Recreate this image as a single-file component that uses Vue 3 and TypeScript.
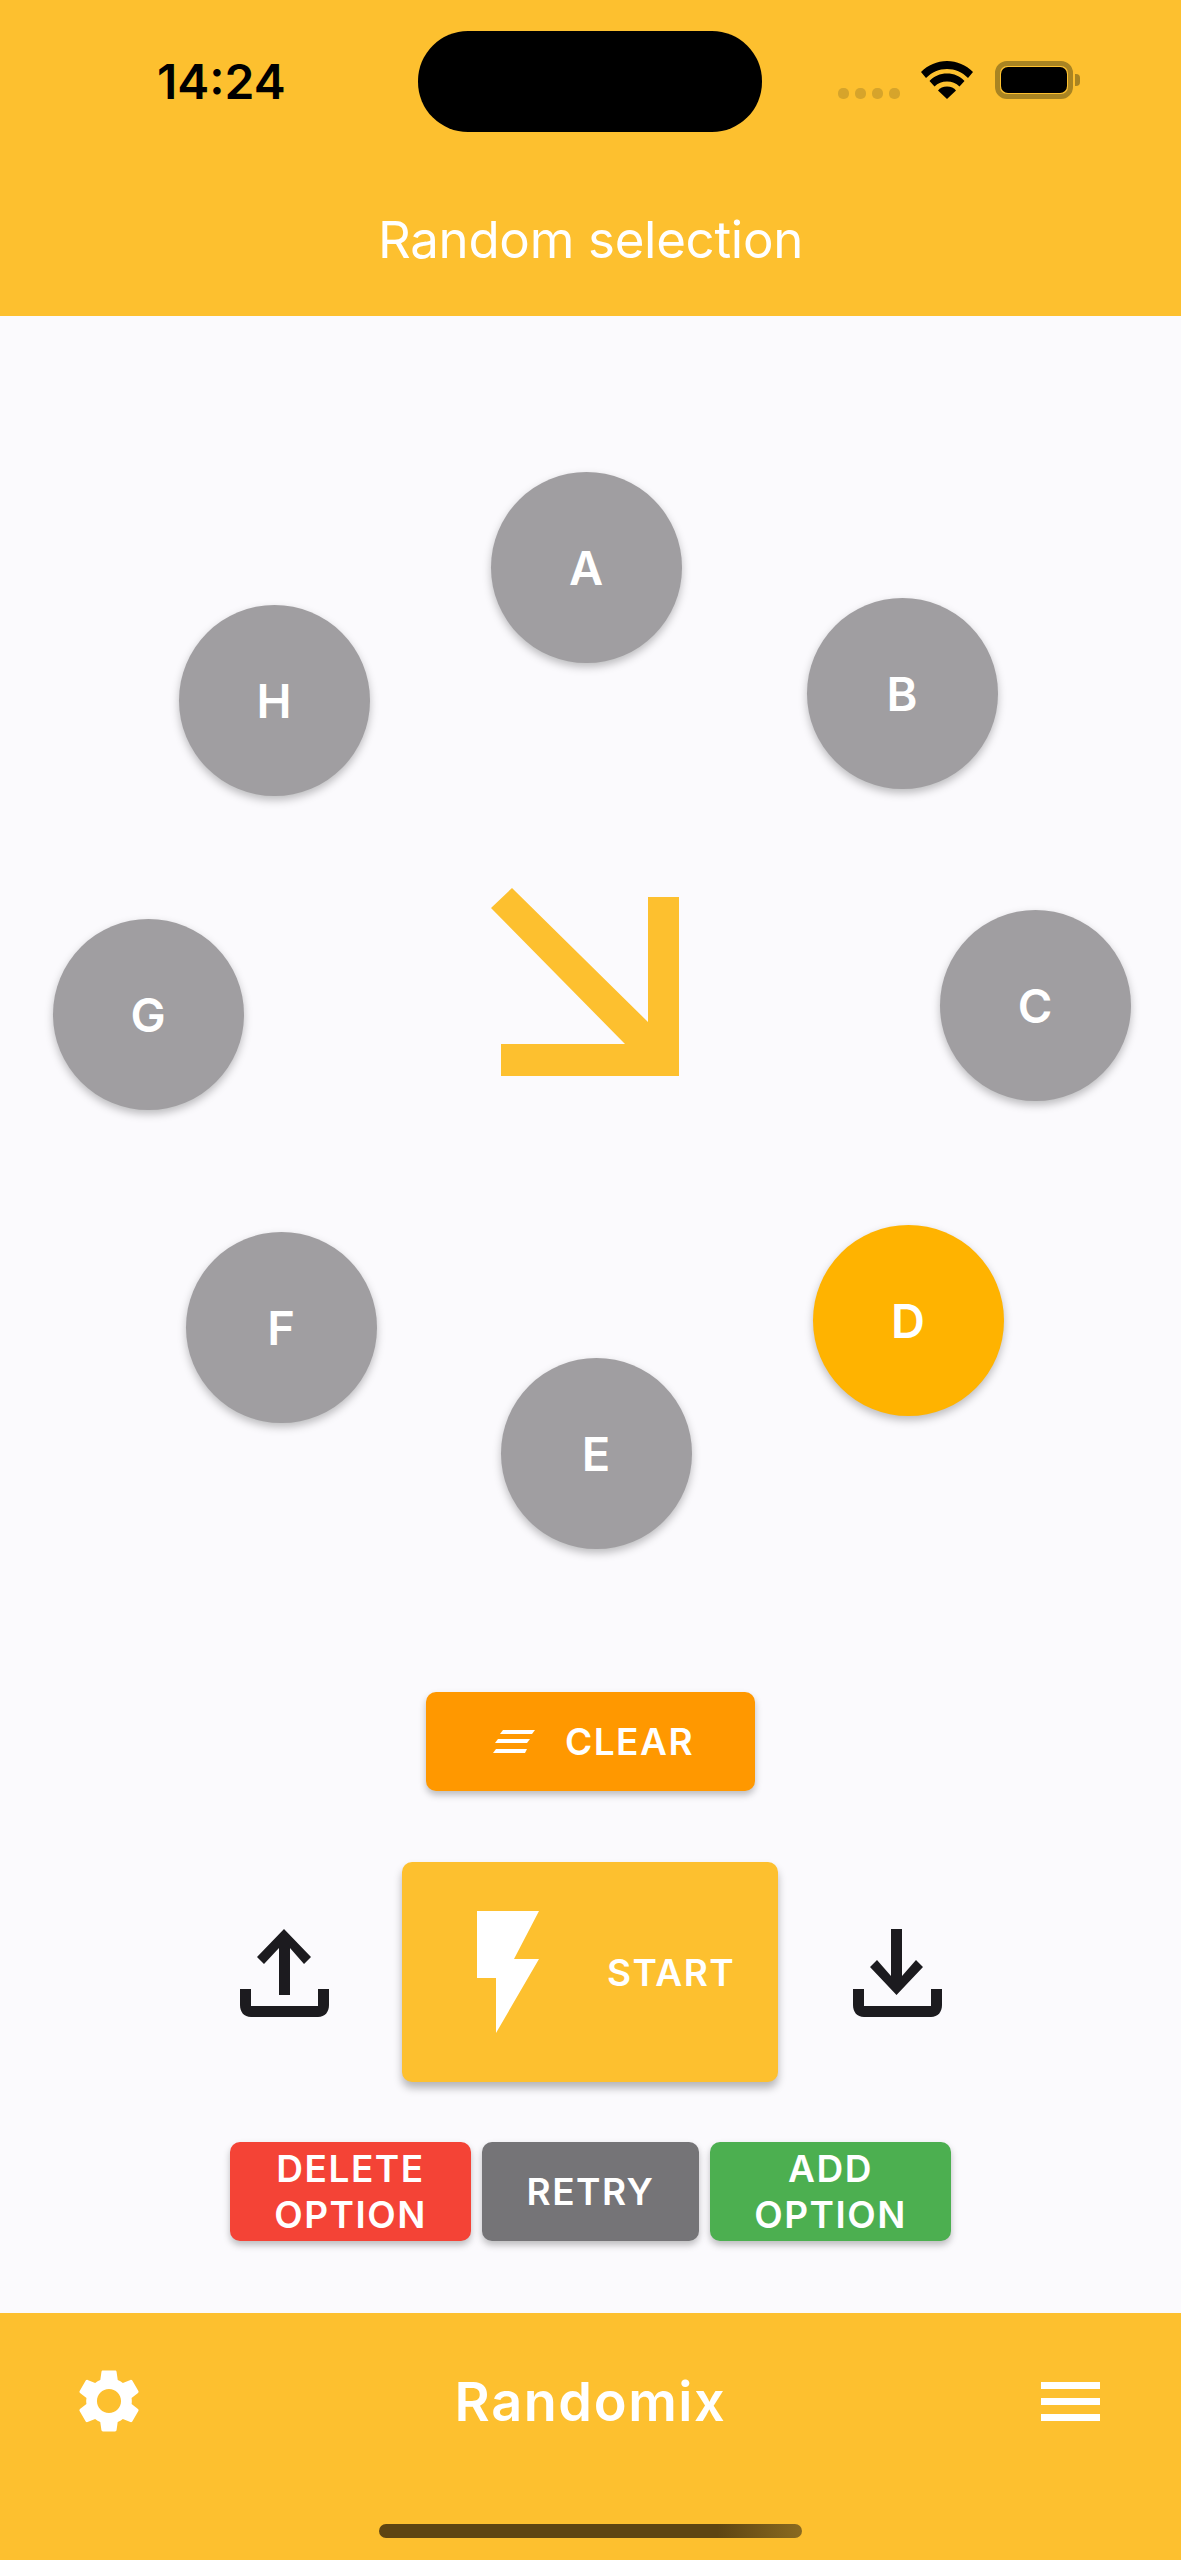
<script setup lang="ts">
interface Option { label: string; x: number; y: number; active?: boolean }
const options: Option[] = [
  { label: 'A', x: 586, y: 567 },
  { label: 'B', x: 902, y: 693 },
  { label: 'C', x: 1035, y: 1005 },
  { label: 'D', x: 908, y: 1320, active: true },
  { label: 'E', x: 596, y: 1453 },
  { label: 'F', x: 281, y: 1327 },
  { label: 'G', x: 148, y: 1014 },
  { label: 'H', x: 274, y: 700 },
]
const CANVAS_TOP = 316
function pos(o: Option) {
  return { left: `${o.x - 95.5}px`, top: `${o.y - CANVAS_TOP - 95.5}px` }
}
</script>

<template>
  <div class="app">
    <header class="top">
      <div class="status">
        <span class="time">14:24</span>
        <span class="island"></span>
        <span class="dots"><i></i><i></i><i></i><i></i></span>
        <svg class="wifi" width="52" height="38" viewBox="0 0 52 38">
          <path d="M26 0C16 0 7 4 0 11L5 17C11 11 18 8 26 8S41 11 47 17L52 11C45 4 36 0 26 0Z" fill="#000" />
          <path d="M26 12.500C19 12.500 13 15 8.500 20L13.500 25.500C17 22 21 20.500 26 20.500S35 22 38.500 25.500L43.500 20C39 15 33 12.500 26 12.500Z" fill="#000" />
          <path d="M26 25.500C22 25.500 19 27 17 29.500L26 38L35 29.500C33 27 30 25.500 26 25.500Z" fill="#000" />
        </svg>
        <span class="battery"><span class="cell"></span></span>
        <span class="tip"></span>
      </div>
      <h1 class="title">Random selection</h1>
    </header>

    <main class="main">
      <section class="wheel">
        <div
          v-for="o in options"
          :key="o.label"
          class="opt"
          :class="{ active: o.active }"
          :style="pos(o)"
        >{{ o.label }}</div>
        <svg class="pointer" width="200" height="200" viewBox="480 880 200 200">
          <path d="M512 888L648 1022V897H679V1076H501V1044H625L491 908Z" fill="#FDC02F" />
        </svg>
      </section>

      <button class="btn clear">
        <svg width="42" height="24" viewBox="0 0 42 24">
          <path d="M10 0H42L39 4H7ZM5 9H37L34 13H2ZM3 19H34L32 23H0Z" fill="#fff" />
        </svg>
        <span>CLEAR</span>
      </button>

      <div class="actions">
        <svg class="io" width="90" height="90" viewBox="0 0 90 90">
          <path d="M44 2L71 30L64 37L50 21V68H39V21L24 37L17 30Z" fill="#1C1B1F" />
          <path d="M0 62H11V79H78V62H89V78C89 85 85 90 78 90H11C4 90 0 85 0 78Z" fill="#1C1B1F" />
        </svg>
        <button class="btn start">
          <svg width="62" height="122" viewBox="0 0 62 122">
            <path d="M0 0H62L37 48H62L19 122V67H0Z" fill="#fff" />
          </svg>
          <span>START</span>
        </button>
        <svg class="io" width="90" height="90" viewBox="0 0 90 90">
          <path d="M38 2H49V49L63 33L70 40L43.500 68L17 40L24 33L38 49Z" fill="#1C1B1F" />
          <path d="M0 62H11V79H78V62H89V78C89 85 85 90 78 90H11C4 90 0 85 0 78Z" fill="#1C1B1F" />
        </svg>
      </div>

      <div class="tools">
        <button class="btn tool red">DELETE OPTION</button>
        <button class="btn tool grey">RETRY</button>
        <button class="btn tool green">ADD OPTION</button>
      </div>
    </main>

    <footer class="bottom">
      <div class="bar">
        <svg class="gear" width="76" height="76" viewBox="0 0 24 24">
          <path fill-rule="evenodd" fill="#fff" d="M19.14 12.94c.04-.3.06-.61.06-.94 0-.32-.02-.64-.07-.94l2.03-1.58c.18-.14.23-.41.12-.61l-1.92-3.32c-.12-.22-.37-.29-.59-.22l-2.39.96c-.5-.38-1.03-.7-1.62-.94l-.36-2.54c-.04-.24-.24-.41-.48-.41h-3.84c-.24 0-.43.17-.47.41l-.36 2.54c-.59.24-1.13.57-1.62.94l-2.39-.96c-.22-.08-.47 0-.59.22L2.74 8.87c-.12.21-.08.47.12.61l2.03 1.58c-.05.3-.09.63-.09.94s.02.64.07.94l-2.03 1.58c-.18.14-.23.41-.12.61l1.92 3.32c.12.22.37.29.59.22l2.39-.96c.5.38 1.03.7 1.62.94l.36 2.54c.05.24.24.41.48.41h3.84c.24 0 .44-.17.47-.41l.36-2.54c.59-.24 1.13-.56 1.62-.94l2.39.96c.22.08.47 0 .59-.22l1.92-3.32c.12-.22.07-.47-.12-.61l-2.01-1.58zM12 15.800c-2.100 0-3.800-1.700-3.800-3.800s1.700-3.800 3.800-3.800 3.800 1.700 3.800 3.800-1.700 3.800-3.800 3.800z" />
        </svg>
        <span class="brand">Randomix</span>
        <span class="menu"><i></i><i></i><i></i></span>
      </div>
      <div class="home"></div>
    </footer>
  </div>
</template>

<style scoped>
.app {
  width: 1181px;
  height: 2560px;
  display: flex;
  flex-direction: column;
  background: #fbfafd;
  font-family: Inter, "Liberation Sans", sans-serif;
  overflow: hidden;
}
.top {
  height: 316px;
  background: #fdc02f;
  box-sizing: border-box;
  padding-top: 31px;
}
.status {
  display: flex;
  align-items: center;
  height: 101px;
  padding-left: 157px;
}
.time {
  width: 129px;
  font-size: 48px;
  font-weight: 600;
  color: #000;
  white-space: nowrap;
}
.island {
  width: 344px;
  height: 101px;
  margin-left: 132px;
  border-radius: 50px;
  background: #000;
}
.dots {
  display: flex;
  gap: 6px;
  margin-left: 76px;
  align-self: flex-start;
  margin-top: 57px;
}
.dots i {
  width: 11px;
  height: 11px;
  border-radius: 5px;
  background: #d6a42b;
}
.wifi {
  margin-left: 21px;
  margin-top: -3px;
}
.battery {
  box-sizing: border-box;
  width: 78px;
  height: 38px;
  margin-left: 22px;
  margin-top: -3px;
  padding: 1px;
  border: 5px solid #a98422;
  border-radius: 12px;
}
.cell {
  display: block;
  height: 100%;
  border-radius: 7px;
  background: #000;
}
.tip {
  width: 5px;
  height: 12px;
  margin-left: 2px;
  margin-top: -3px;
  border-radius: 0 4px 4px 0;
  background: #a98422;
}
.title {
  margin: 77px 0 0;
  font-size: 51px;
  font-weight: 400;
  letter-spacing: -0.3px;
  line-height: 62px;
  text-align: center;
  color: #fff;
}
.main {
  flex: 1;
  display: flex;
  flex-direction: column;
  align-items: center;
}
.wheel {
  position: relative;
  width: 1181px;
  height: 1376px;
}
.opt {
  position: absolute;
  width: 191px;
  height: 191px;
  display: flex;
  align-items: center;
  justify-content: center;
  border-radius: 50%;
  background: #a09ea1;
  box-shadow: 0 4px 8px rgba(0, 0, 0, 0.25);
  color: #fff;
  font-size: 47px;
  font-weight: 600;
}
.opt.active {
  background: #ffb300;
}
.pointer {
  position: absolute;
  left: 480px;
  top: 564px;
}
.btn {
  border: 0;
  padding: 0;
  border-radius: 10px;
  color: #fff;
  font-family: inherit;
  font-weight: 600;
  letter-spacing: 1.500px;
  box-shadow: 0 4px 7px rgba(0, 0, 0, 0.25);
}
.clear {
  width: 329px;
  height: 99px;
  display: flex;
  align-items: center;
  justify-content: center;
  gap: 30px;
  padding-left: 6px;
  box-sizing: border-box;
  background: #ff9800;
  font-size: 37px;
}
.actions {
  display: flex;
  align-items: center;
  margin-top: 71px;
  margin-left: 2px;
}
.start {
  width: 376px;
  height: 220px;
  margin: 0 75px 0 72px;
  display: flex;
  align-items: center;
  gap: 68px;
  padding-left: 75px;
  box-sizing: border-box;
  background: #fdc02f;
  font-size: 37px;
  box-shadow: 0 6px 8px rgba(0, 0, 0, 0.28);
}
.tools {
  display: flex;
  gap: 11px;
  margin-top: 60px;
}
.tool {
  height: 99px;
  font-size: 37px;
  line-height: 46px;
}
.red,
.green {
  width: 241px;
}
.grey {
  width: 217px;
}
.red {
  background: #f44336;
}
.grey {
  background: #757477;
}
.green {
  background: #4caf50;
}
.bottom {
  height: 247px;
  background: #fdc02f;
  box-sizing: border-box;
  padding-top: 50px;
}
.bar {
  display: grid;
  grid-template-columns: 1fr auto 1fr;
  align-items: center;
  height: 76px;
  padding: 0 81px;
}
.gear {
  margin-left: -10px;
}
.brand {
  font-size: 54px;
  font-weight: 600;
  letter-spacing: 1.600px;
  color: #fff;
}
.menu {
  display: flex;
  flex-direction: column;
  gap: 9px;
  width: 59px;
  justify-self: end;
}
.menu i {
  height: 7px;
  background: #fff;
}
.home {
  width: 423px;
  height: 14px;
  margin: 85px auto 0;
  border-radius: 7px;
  background: linear-gradient(90deg, #5e4512 0%, #5e4512 80%, #8a6a20 100%);
}
</style>
